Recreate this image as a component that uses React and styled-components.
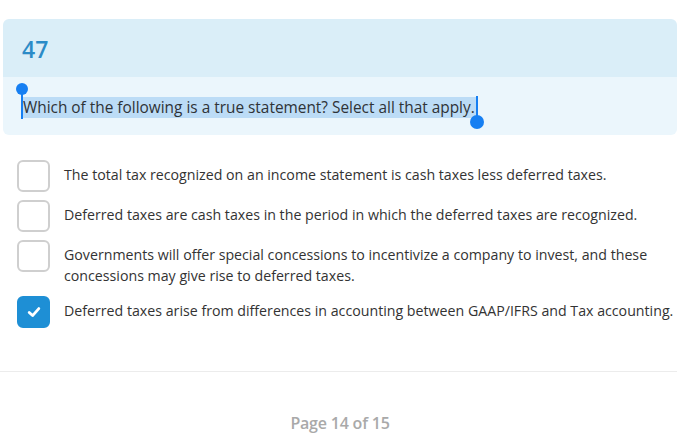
import React from 'react'
import styled, { createGlobalStyle } from 'styled-components'

const GlobalStyle = createGlobalStyle`
  html, body {
    margin: 0;
    padding: 0;
    background: #ffffff;
  }
  body {
    font-family: "Open Sans", "Noto Sans", sans-serif;
    color: #333333;
  }
`

const options = [
  { text: 'The total tax recognized on an income statement is cash taxes less deferred taxes.', checked: false },
  { text: 'Deferred taxes are cash taxes in the period in which the deferred taxes are recognized.', checked: false },
  {
    text: 'Governments will offer special concessions to incentivize a company to invest, and these concessions may give rise to deferred taxes.',
    checked: false,
  },
  { text: 'Deferred taxes arise from differences in accounting between GAAP/IFRS and Tax accounting.', checked: true },
]

function CheckMark() {
  return (
    <svg width="16" height="16" viewBox="0 0 16 16">
      <path d="M3.2 8.4 L6.6 11.6 L12.8 4.6" fill="none" stroke="#ffffff" strokeWidth="2.8" strokeLinecap="round" strokeLinejoin="round" />
    </svg>
  )
}

function App() {
  return (
    <Page>
      <GlobalStyle />
      <Card>
        <CardHeader>
          <Number>47</Number>
        </CardHeader>
        <CardBody>
          <Question>
            <Selection>
              <StartHandle />
              Which of the following is a true statement? Select all that apply.
              <EndHandle />
            </Selection>
          </Question>
        </CardBody>
      </Card>

      <Options>
        {options.map((o, i) => (
          <Option key={i}>
            <Box checked={o.checked}>{o.checked && <CheckMark />}</Box>
            <OptionText>{o.text}</OptionText>
          </Option>
        ))}
      </Options>

      <Divider />
      <Footer>Page 14 of 15</Footer>
    </Page>
  )
}

export default App

const Page = styled.div`
  width: 674px;
  padding: 19px 0 0 3px;
`

const Card = styled.div`
  border-radius: 6px;
  overflow: hidden;
`

const CardHeader = styled.div`
  height: 58px;
  background: #daeef8;
  padding-left: 19px;
  display: flex;
  align-items: center;
`

const Number = styled.div`
  font-size: 23px;
  font-weight: 600;
  color: #2b8bc7;
  line-height: 1;
  margin-top: 2px;
`

const CardBody = styled.div`
  background: #ebf6fc;
  padding: 20px 19px 17px;
`

const Question = styled.div`
  font-size: 15.4px;
  line-height: 21px;
  color: #2f3337;
`

const Selection = styled.span`
  position: relative;
  background: #bcdcf6;
  padding: 0 1px 0 1px;
`

const StartHandle = styled.span`
  position: absolute;
  left: -1px;
  top: -8px;
  width: 2px;
  height: 30px;
  background: #167ff2;
  &::before {
    content: '';
    position: absolute;
    left: -5px;
    top: -6px;
    width: 12px;
    height: 12px;
    border-radius: 50%;
    background: #167ff2;
  }
`

const EndHandle = styled.span`
  position: absolute;
  right: -2px;
  top: -1px;
  width: 2px;
  height: 25px;
  background: #167ff2;
  &::after {
    content: '';
    position: absolute;
    left: -6px;
    top: 19px;
    width: 14px;
    height: 14px;
    border-radius: 50%;
    background: #167ff2;
  }
`

const Options = styled.div`
  display: flex;
  flex-direction: column;
  gap: 8px;
  margin-top: 25px;
  padding-left: 14px;
`

const Option = styled.div`
  display: flex;
  align-items: flex-start;
  gap: 14px;
`

const Box = styled.div`
  flex: none;
  width: 33px;
  height: 32px;
  box-sizing: border-box;
  border-radius: 6px;
  border: 2px solid ${p => (p.checked ? '#1e8fd5' : '#cfcfcf')};
  background: ${p => (p.checked ? '#1e8fd5' : '#ffffff')};
  display: flex;
  align-items: center;
  justify-content: center;
`

const OptionText = styled.div`
  font-size: 14.2px;
  line-height: 21px;
  padding: 4px 0 2px;
  color: #333333;
`

const Divider = styled.div`
  height: 1px;
  background: #ececec;
  margin: 43px 0 0 -3px;
  width: 677px;
`

const Footer = styled.div`
  text-align: center;
  margin-top: 41px;
  font-size: 16px;
  line-height: 20px;
  font-weight: 600;
  letter-spacing: -0.2px;
  color: #a9a9a9;
  font-stretch: 88%;
`
